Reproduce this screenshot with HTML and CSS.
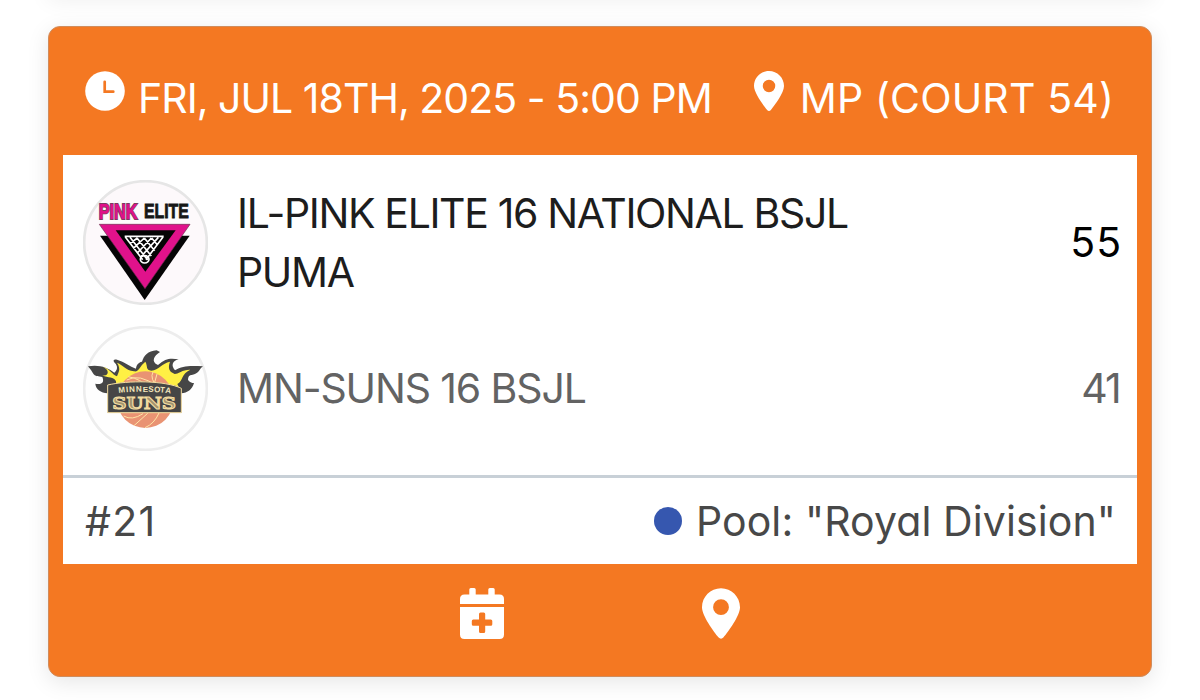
FILE: index.html
```html
<!DOCTYPE html>
<html lang="en">
<head>
<meta charset="utf-8">
<title>Game card</title>
<link rel="stylesheet" href="styles.css">
</head>
<body>
<div class="previous-card"></div>
<article class="card">
  <header class="card-header">
    <div class="when">
      <svg class="clock" viewBox="0 0 40 40"><circle cx="20" cy="20" r="19.8" fill="#fff"/><path d="M19.7 10.8V20.7H28.3" fill="none" stroke="#f47822" stroke-width="2.7" stroke-linecap="round"/></svg>
      <span class="date">FRI, JUL 18TH, 2025 - 5:00 PM</span>
    </div>
    <div class="where">
      <svg class="pin" viewBox="0 0 384 512"><path fill="#fff" d="M215.700 499.200C267 435 384 279.400 384 192C384 86 298 0 192 0S0 86 0 192c0 87.400 117 243 168.300 307.200c12.300 15.300 35.100 15.300 47.400 0zM192 112a80 80 0 1 1 0 160a80 80 0 1 1 0-160z"/></svg>
      <span class="court">MP (COURT 54)</span>
    </div>
  </header>
  <main class="panel">
    <section class="team">
      <svg class="logo" viewBox="24 28 375 375">
        <circle cx="211.500" cy="215.500" r="184" fill="#fdf9fb" stroke="#e6e6e6" stroke-width="8"/>
        <g font-family="Liberation Sans" font-weight="700" transform="scale(1 1.32)">
          <text x="71" y="109" font-size="49" fill="#e0108a" stroke="#7c3b60" stroke-width="4" paint-order="stroke">PINK</text>
          <text x="207" y="108" font-size="47.500" fill="#171717" stroke="#171717" stroke-width="2">ELITE</text>
        </g>
        <path d="M75 195H344L209 388Z" fill="#050505"/>
        <path d="M73 161H345L210 354Z" fill="#e0128b" stroke="#6c294d" stroke-width="2"/>
        <path d="M122 179H302L211 303Z" fill="#050505"/>
        <g fill="none" stroke="#fff" stroke-width="5"><path d="M149 197H266M151 199L203 267M165 200L218 268M186 202L229 256M208 202L239 240M230 202L248 224M264 199L213 267M250 200L199 257M229 202L187 247M208 202L175 233M187 202L165 219"/><ellipse cx="209" cy="266" rx="13" ry="11"/></g>
      </svg>
      <h2 class="name winner"><span class="line">IL-PINK ELITE 16 NATIONAL BSJL</span> <span class="line">PUMA</span></h2>
      <span class="score winner">55</span>
    </section>
    <section class="team loser">
      <svg class="logo" viewBox="24 30 375 375">
        <circle cx="211.500" cy="217.500" r="184" fill="#fefefe" stroke="#ededed" stroke-width="8"/>
        <path fill="#464646" d="M39 151C72 145 97 154 118 170C127 162 130 151 119 140C112 133 118 129 126 131C149 138 164 151 183 158C184 148 189 139 201 137C207 119 218 105 245 103L255 108C238 119 226 137 249 147C272 127 285 126 311 130C291 135 288 149 300 163C322 148 348 149 384 151C373 158 374 172 353 176C341 178 340 181 339 192C348 202 354 201 357 201C352 220 337 231 319 232V290H98V232C77 229 63 222 61 203C80 207 89 200 82 183C71 179 61 184 53 170C47 161 44 157 39 151Z"/>
        <path fill="#fff044" d="M84 153C105 158 111 176 126 181C130 169 139 160 126 140C145 148 151 162 177 166C192 169 193 151 211 137C219 150 211 162 229 164C252 161 261 142 285 137C278 157 283 166 295 172C303 180 319 160 346 161C318 174 325 194 307 204L315 221H102L105 206C111 200 126 211 123 196C117 182 99 187 82 178C105 181 102 160 84 153Z"/>
        <circle cx="211" cy="251" r="85" fill="#e99373"/>
        <g fill="none" stroke="#ffe5a6" stroke-width="3"><path d="M155 192Q193 171 247 211M160 182Q199 190 217 212M234 168Q223 188 250 216M246 174L239 199M177 329L218 292M210 335Q238 323 252 291M146 300Q171 315 204 293"/></g>
        <path d="M98 207C158 193 270 193 319 217V290H98Z" fill="#464646" stroke="#f4dda1" stroke-width="3"/>
        <g font-weight="700" fill="#f4e6bd">
          <text y="231" font-family="Liberation Sans" font-size="24" x="131 154 163 183 203 220 237 254 270" dy="0 -2 -1 -1 0 0 1 1 1" rotate="-8 -6 -4 -2 0 2 4 6 8">MINNESOTA</text>
          <text x="112" y="279" font-family="DejaVu Serif" font-size="49" textLength="191" lengthAdjust="spacingAndGlyphs" fill="#a3946f" stroke="#f4dda1" stroke-width="3">SUNS</text>
        </g>
      </svg>
      <h2 class="name">MN-SUNS 16 BSJL</h2>
      <span class="score second">41</span>
    </section>
    <footer class="details">
      <span class="number">#21</span>
      <div class="pool"><i class="dot"></i><span class="pool-name">Pool: "Royal Division"</span></div>
    </footer>
  </main>
  <nav class="actions">
    <svg class="calendar" viewBox="0 0 44 51"><path fill="#fff" fill-rule="evenodd" d="M9.300 1.500Q9.300 0 10.800 0H14.200Q15.700 0 15.700 1.500V6.500H28.300V1.500Q28.300 0 29.800 0H33.200Q34.700 0 34.700 1.500V6.500H39.500Q44 6.500 44 11V16H0V11Q0 6.500 4.500 6.500H9.300ZM0 19H44V46.500Q44 51 39.500 51H4.500Q0 51 0 46.500ZM20.500 24.500Q19 24.500 19 26V31.500H13.300Q11.800 31.500 11.800 33V36.300Q11.800 37.800 13.300 37.800H19V43.500Q19 45 20.500 45H23.700Q25.200 45 25.200 43.500V37.800H30.800Q32.300 37.800 32.300 36.300V33Q32.300 31.500 30.800 31.500H25.200V26Q25.200 24.500 23.700 24.500Z"/></svg>
    <svg class="map-pin" viewBox="0 0 384 512"><path fill="#fff" d="M215.700 499.200C267 435 384 279.400 384 192C384 86 298 0 192 0S0 86 0 192c0 87.400 117 243 168.300 307.200c12.300 15.300 35.100 15.300 47.400 0zM192 112a80 80 0 1 1 0 160a80 80 0 1 1 0-160z"/></svg>
  </nav>
</article>
</body>
</html>
```
FILE: styles.css
```css
* { box-sizing: border-box; }
body {
  margin: 0;
  height: 700px;
  overflow: hidden;
  background: #fff;
  color: #484848;
  font: 400 41px/59px Inter, "Open Sans", sans-serif;
  font-feature-settings: "cv11";
}
svg { display: block; flex: none; }
span { white-space: nowrap; }
.previous-card {
  width: 1104px;
  height: 20px;
  margin: -20px auto 26px;
  box-shadow: 0 0 22px rgba(0, 0, 0, .07);
}
.card {
  width: 1104px;
  height: 651px;
  margin: 0 auto;
  padding: 0 14px;
  border: 1px solid #d08c5c;
  border-radius: 12px;
  background: #f47822;
  box-shadow: 0 5px 22px rgba(0, 0, 0, .1);
}
.card-header {
  height: 128px;
  padding: 42px 23px 0 22px;
  display: flex;
  justify-content: space-between;
  color: #fff;
}
.when, .where { display: flex; }
.clock { width: 40px; height: 40px; margin: 2px 13px 0 0; }
.pin { width: 30px; height: 40px; margin: 2px 16px 0 0; }
.date { letter-spacing: -.97px; }
.court { letter-spacing: .15px; }
.panel { height: 409px; padding-top: 25px; background: #fff; }
.team {
  height: 125px;
  margin-bottom: 21px;
  padding: 0 17px 0 20px;
  display: flex;
  align-items: center;
}
.logo { width: 125px; height: 125px; margin-right: 29px; }
.name { flex: 1; margin: 0; font: inherit; letter-spacing: -1.35px; }
.line { display: block; }
.winner { color: #1d1d1d; }
.score { margin-right: -2px; }
.score.winner { color: #000; letter-spacing: .9px; }
.score.second { letter-spacing: -1.8px; margin-right: 0; }
.loser { color: #636363; margin-bottom: 24px; }
.loser .name { letter-spacing: -1.13px; }
.number { letter-spacing: 1.3px; }
.pool-name { letter-spacing: .1px; }
.details {
  height: 89px;
  padding: 0 21px 0 22px;
  display: flex;
  justify-content: space-between;
  align-items: center;
  border-top: 3px solid #c8d0d7;
}
.pool { display: flex; align-items: center; }
.dot { width: 28px; height: 28px; margin-right: 14px; border-radius: 50%; background: #3657af; }
.actions { display: flex; justify-content: center; gap: 198px; padding-top: 24px; }
.calendar { width: 44px; height: 51px; }
.map-pin { width: 38px; height: 51px; }
```
